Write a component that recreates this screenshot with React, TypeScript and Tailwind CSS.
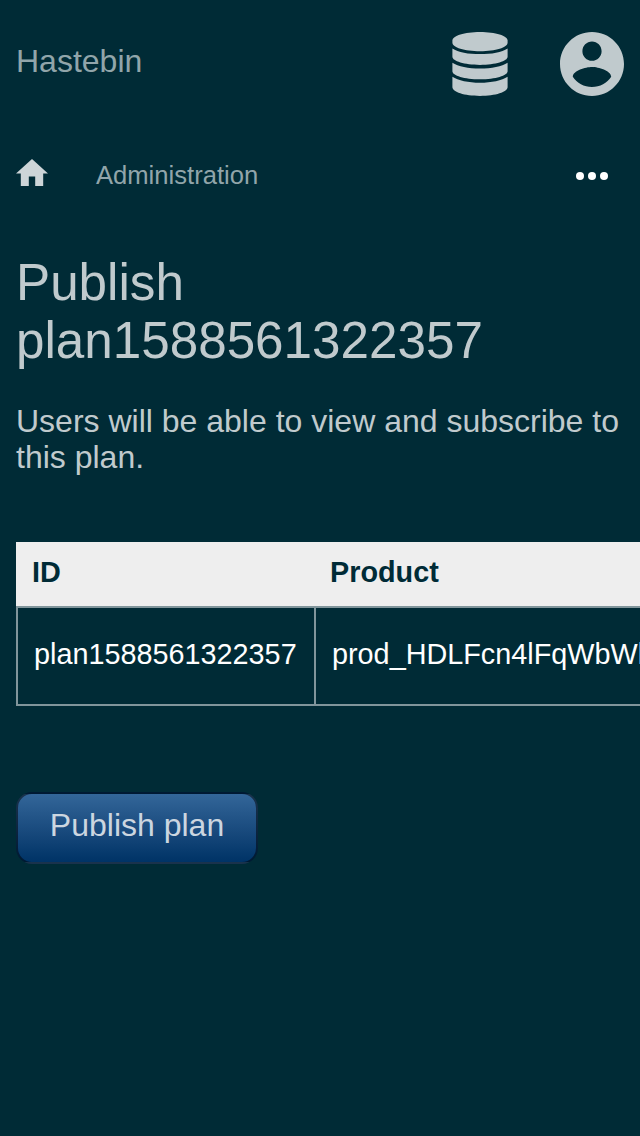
const plans = [{ id: 'plan1588561322357', product: 'prod_HDLFcn4lFqWbWl' }]

function DatabaseIcon() {
  return (
    <svg viewBox="0 0 56 64" className="h-16 w-14" fill="currentColor" aria-hidden="true">
      <path d="M28 0C43.5 0 55.6 3.8 55.6 8.5v2.2C55.6 15.400 43.500 19.200 28 19.200S.4 15.400.4 10.700V8.500C.4 3.800 12.500 0 28 0z" />
      <path d="M.4 16.400C6 20.200 16.500 22.100 28 22.100s22-1.900 27.600-5.700v8.400C55.600 29.200 43.500 32.900 28 32.900S.4 29.200.4 24.800z" />
      <path d="M.4 30.700C6 34.500 16.500 36.500 28 36.500s22-2 27.600-5.800v8.500C55.600 43.600 43.500 47.300 28 47.300S.4 43.600.4 39.200z" />
      <path d="M.4 44.700C6 48.500 16.500 50.700 28 50.700s22-2.200 27.600-6v10.400C55.600 60.200 43.500 64 28 64S.4 60.200.4 55.100z" />
    </svg>
  )
}

function AccountIcon() {
  return (
    <svg viewBox="2 2 20 20" className="size-16" fill="currentColor" aria-hidden="true">
      <path d="M12 2C6.48 2 2 6.48 2 12s4.48 10 10 10 10-4.48 10-10S17.52 2 12 2zm0 3c1.66 0 3 1.34 3 3s-1.34 3-3 3-3-1.34-3-3 1.34-3 3-3zm0 14.2c-2.5 0-4.71-1.28-6-3.22.03-1.99 4-3.08 6-3.08 1.99 0 5.97 1.09 6 3.08-1.29 1.94-3.5 3.22-6 3.22z" />
    </svg>
  )
}

export default function App() {
  return (
    <div className="min-h-screen overflow-hidden bg-[#002b36] px-4 font-['Liberation_Sans',Arial,sans-serif] text-[#c0cacd]">
      <header className="flex h-32 items-center justify-between">
        <span className="-mt-1.5 text-[32px] leading-9 text-[#91a5aa]">Hastebin</span>
        <div className="flex gap-[52px]">
          <DatabaseIcon />
          <AccountIcon />
        </div>
      </header>

      <nav className="flex h-24 items-center">
        <svg viewBox="2 3 20 17" className="-mt-[7px] h-[27.2px] w-8 text-[#cdd5d8]" fill="currentColor" aria-hidden="true">
          <path d="M10 20v-6h4v6h5v-8h3L12 3 2 12h3v8z" />
        </svg>
        <span className="ml-12 pb-0.5 text-[25.6px] leading-[30px] text-[#91a5aa]">Administration</span>
        <svg viewBox="4 10 16 4" className="mr-4 ml-auto h-2 w-8 text-white" fill="currentColor" aria-hidden="true">
          <circle cx="6" cy="12" r="2" />
          <circle cx="12" cy="12" r="2" />
          <circle cx="18" cy="12" r="2" />
        </svg>
      </nav>

      <main>
        <h1 className="mt-[30px] text-[51.2px] leading-[58px]">Publish plan1588561322357</h1>
        <p className="mt-[33px] text-[32px] leading-9">Users will be able to view and subscribe to this plan.</p>

        <div className="mt-[67px] w-[900px] text-[28.8px] leading-8">
          <div className="flex h-16 items-center bg-[#eeeeee] font-bold text-[#002b36]">
            <div className="w-[298px] px-4 pb-1">ID</div>
            <div className="px-4 pb-1">Product</div>
          </div>
          {plans.map((plan) => (
            <div key={plan.id} className="flex h-[100px] border-y-2 border-l-2 border-[#80959b] text-white">
              <div className="flex w-[298px] items-center border-r-2 border-[#80959b] px-4 pb-1">{plan.id}</div>
              <div className="flex items-center px-4 pb-1">{plan.product}</div>
            </div>
          ))}
        </div>

        <button className="mt-[86px] h-[72px] w-[242px] rounded-2xl border-2 border-[#00000080] bg-linear-to-b from-[#336699] to-[#003366] pb-1.5 text-[32px] leading-9 text-[#ccd6e0]">
          Publish plan
        </button>
      </main>
    </div>
  )
}
